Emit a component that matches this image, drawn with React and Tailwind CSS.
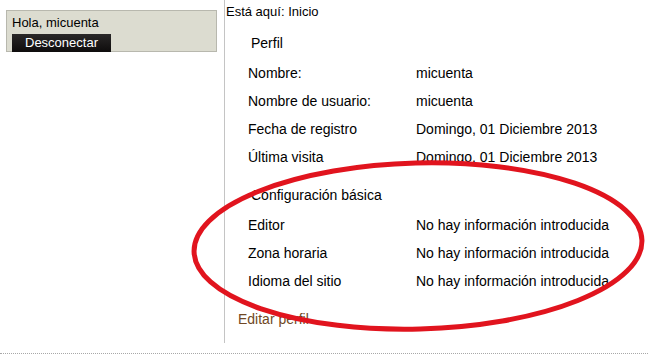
export default function App() {
  const perfil = [
    ["Nombre:", "micuenta"],
    ["Nombre de usuario:", "micuenta"],
    ["Fecha de registro", "Domingo, 01 Diciembre 2013"],
    ["Última visita", "Domingo, 01 Diciembre 2013"],
  ];
  const basica = [
    ["Editor", "No hay información introducida"],
    ["Zona horaria", "No hay información introducida"],
    ["Idioma del sitio", "No hay información introducida"],
  ];

  return (
    <div className="relative w-[648px] h-[360px] bg-white overflow-hidden font-['Liberation_Sans',Arial,sans-serif] text-black">
      <div className="flex">
        {/* left column: login box */}
        <div className="w-[224px] shrink-0">
          <div className="ml-[6px] mt-[10px] w-[211px] h-[42px] border border-[#b8b8ae] bg-[#dcdcd0] pl-[5px] pt-[4px]">
            <div className="text-[13px] leading-[15px]">Hola, micuenta</div>
            <button className="w-[99px] h-[18px] bg-gradient-to-b from-[#2a2828] to-[#0e0c0c] text-white text-[13px] leading-[18px] text-center">
              Desconectar
            </button>
          </div>
        </div>

        {/* main content */}
        <div className="flex-1 border-l border-[#c4c4c4] pl-[1px] pb-[10px]">
          <div className="mt-[4px] h-[16px] text-[13px] leading-[16px]">Está aquí: Inicio</div>

          <div className="mt-[9px] h-[28px] flex items-center pl-[25px] text-[14px]">Perfil</div>
          <div className="mt-[2px] pl-[22px]">
            {perfil.map(([k, v]) => (
              <div key={k} className="h-[28px] flex items-center text-[14px]">
                <span className="w-[168px] shrink-0">{k}</span>
                <span>{v}</span>
              </div>
            ))}
          </div>

          <div className="mt-[10px] h-[28px] flex items-center pl-[25px] text-[14px]">Configuración básica</div>
          <div className="mt-[2px] pl-[22px]">
            {basica.map(([k, v]) => (
              <div key={k} className="h-[28px] flex items-center text-[14px]">
                <span className="w-[168px] shrink-0">{k}</span>
                <span>{v}</span>
              </div>
            ))}
          </div>

          <div className="mt-[10px] h-[28px] flex items-center pl-[12px] text-[14px] text-[#704824]">
            Editar perfil
          </div>
        </div>
      </div>

      <div className="mt-[10px] border-t border-dotted border-[#a8a8a8]" />

      {/* red hand-drawn circle annotation */}
      <svg className="absolute inset-0 pointer-events-none" width="648" height="360" viewBox="0 0 648 360">
        <ellipse
          cx="418"
          cy="246"
          rx="224"
          ry="83"
          transform="rotate(-1.5 418 246)"
          fill="none"
          stroke="#e1141e"
          strokeWidth="5"
        />
      </svg>
    </div>
  );
}
